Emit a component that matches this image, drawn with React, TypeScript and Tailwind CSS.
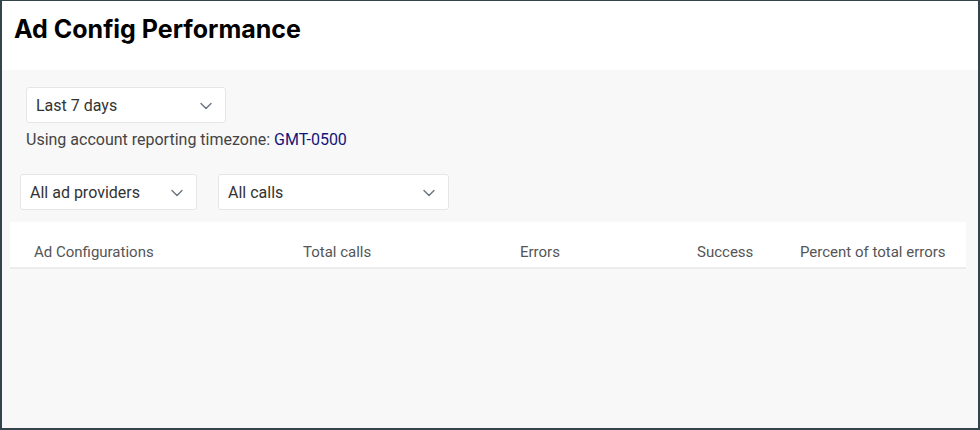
import React from 'react';

const font = { fontFamily: 'Roboto, "Noto Sans", sans-serif' };
const titleFont = { fontFamily: 'Inter, "Noto Sans", sans-serif' };

const Chevron = () => (
    <svg width="14" height="14" viewBox="0 0 14 14" fill="none" className="text-gray-500">
        <path d="M2 4.5l5 5 5-5" stroke="currentColor" strokeWidth="1.4" strokeLinecap="round" strokeLinejoin="round" />
    </svg>
);

// Simple select-look box with chevron
const Dropdown = ({ label, className }: { label: string; className: string }) => (
    <div
        className={`h-9 flex items-center justify-between bg-white border border-[#e6e6e6] rounded-[3px] pl-[9px] pr-3 pt-[2px] text-[16px] text-[#333] ${className}`}
    >
        <span>{label}</span>
        <Chevron />
    </div>
);

const columns = ['Ad Configurations', 'Total calls', 'Errors', 'Success', 'Percent of total errors'];

export default function App() {
    return (
        <div className="w-[980px] h-[430px] border-2 border-t border-[#34444c] bg-[#f8f8f8] flex flex-col overflow-hidden" style={font}>
            {/* Header */}
            <div className="h-[69px] bg-white flex items-start pl-3 pt-[10px]">
                <h1 className="text-[25px] font-bold text-black" style={titleFont}>
                    Ad Config Performance
                </h1>
            </div>

            {/* Filters */}
            <div className="pl-[24px] pt-[17px]">
                <Dropdown label="Last 7 days" className="w-[200px]" />
                <div className="mt-[5px] text-[16px] text-[#444]">
                    Using account reporting timezone: <span className="text-[#14147a]">GMT-0500</span>
                </div>
            </div>
            <div className="pl-[18px] pt-[22px] flex gap-[21px]">
                <Dropdown label="All ad providers" className="w-[177px]" />
                <Dropdown label="All calls" className="w-[231px]" />
            </div>

            {/* Table header */}
            <div className="mt-[12px] ml-[8px] w-[956px] h-[47px] bg-white border-b-2 border-[#ececec] grid grid-cols-[269px_217px_177px_103px_1fr] items-center pl-6 pt-[16px] text-[15px] text-[#555]">
                {columns.map((c) => (
                    <div key={c}>{c}</div>
                ))}
            </div>
        </div>
    );
}
